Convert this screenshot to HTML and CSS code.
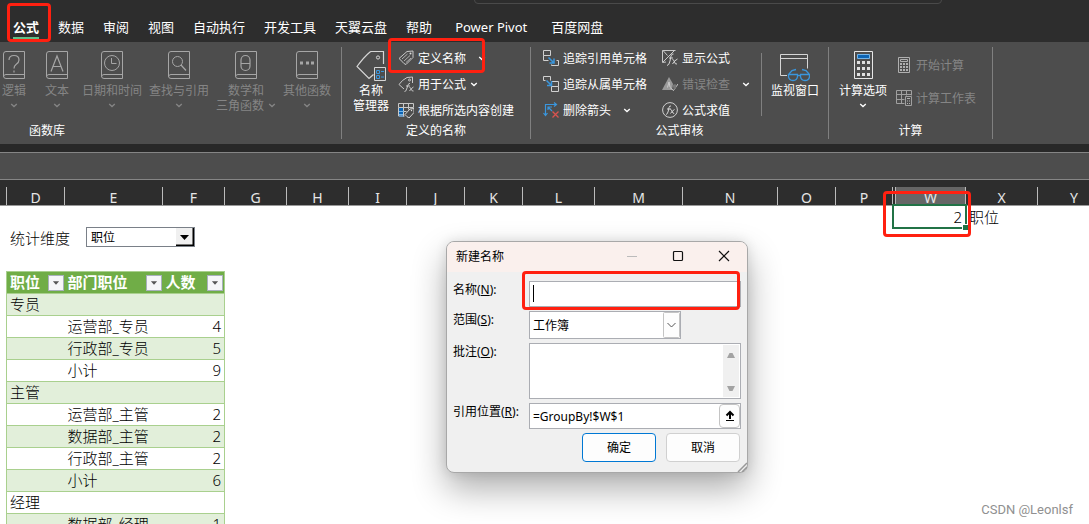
FILE: index.html
```html
<!DOCTYPE html>
<html lang="zh-CN">
<head>
<meta charset="utf-8">
<title>新建名称</title>
<link rel="stylesheet" href="styles.css">
</head>
<body>
<svg class="defs" aria-hidden="true">
  <symbol id="book" viewBox="0 0 22 28"><path d="M3 .5H21.500V27.500H3Q.5 27.500 .5 25V3Q.5 .5 3 .5M.5 25.500Q.8 23.500 3 23.500H21.500" fill="none" stroke="#a6a6a6"/></symbol>
  <symbol id="caret" viewBox="0 0 8 5"><path d="M1.200 1L4 3.600L6.800 1" fill="none" stroke="currentColor" stroke-width="1.300"/></symbol>
  <symbol id="filter" viewBox="0 0 16 16"><path d="M4.500 6h7L8 10Z" fill="#555"/></symbol>
</svg>
<div class="app">
  <header class="tabs">
    <div class="search"></div>
    <button class="tab active">公式<span class="mark mark-tab"></span></button>
    <button class="tab">数据</button>
    <button class="tab">审阅</button>
    <button class="tab">视图</button>
    <button class="tab">自动执行</button>
    <button class="tab">开发工具</button>
    <button class="tab">天翼云盘</button>
    <button class="tab">帮助</button>
    <button class="tab latin">Power Pivot</button>
    <button class="tab">百度网盘</button>
  </header>

  <section class="ribbon">
    <div class="group library">
      <div class="tools">
        <button class="big off"><svg width="22" height="28"><use href="#book"/><path d="M6 9Q6 4.500 11 4.500T16 9Q16 11.500 13 13.500Q11 15 11 17.500M11 19.500v2" fill="none" stroke="#a6a6a6" stroke-width="1.200"/></svg><span>逻辑</span><svg class="caret"><use href="#caret"/></svg></button>
        <button class="big off"><svg width="22" height="28"><use href="#book"/><path d="M5 20.500L11 5l6 15.500M7 15.500h8" fill="none" stroke="#a6a6a6" stroke-width="1.200"/></svg><span>文本</span><svg class="caret"><use href="#caret"/></svg></button>
        <button class="big off"><svg width="22" height="28"><use href="#book"/><circle cx="11" cy="12" r="7.500" fill="none" stroke="#a6a6a6"/><path d="M10.500 7v5.500h5" fill="none" stroke="#a6a6a6"/></svg><span>日期和时间</span><svg class="caret"><use href="#caret"/></svg></button>
        <button class="big off"><svg width="22" height="28"><use href="#book"/><circle cx="9.500" cy="10.500" r="5" fill="none" stroke="#a6a6a6"/><path d="M13 14l5 5.500" stroke="#a6a6a6" stroke-width="1.200"/></svg><span>查找与引用</span><svg class="caret"><use href="#caret"/></svg></button>
        <button class="big off"><svg width="22" height="28"><use href="#book"/><rect x="6" y="4.500" width="9" height="15" rx="4.500" fill="none" stroke="#a6a6a6" stroke-width="1.200"/><path d="M6 12.500h9" stroke="#a6a6a6"/></svg><span>数学和</span><span class="tail">三角函数 <svg class="caret"><use href="#caret"/></svg></span></button>
        <button class="big off"><svg width="22" height="28"><use href="#book"/><path d="M4 10.500h3v3H4zM10 10.500h3v3h-3zM15 10.500h3v3h-3z" fill="#a6a6a6"/></svg><span>其他函数</span><svg class="caret"><use href="#caret"/></svg></button>
      </div>
      <div class="caption">函数库</div>
    </div>

    <div class="group names">
      <div class="tools">
        <button class="big"><svg width="30" height="30" fill="none"><path d="M17.500 23.500L13 27.500L1 15.500Q8 6 14 1L15 .5H27.500V13" stroke="#d6d6d6" stroke-width="1.200"/><circle cx="22" cy="6.500" r="1.600" stroke="#d6d6d6"/><path d="M18.500 16.500h11v13h-11z" stroke="#d6d6d6"/><path d="M20.500 19.500h3v3h-3zM20.500 24.500h3v3h-3zM25 20.500H28M25 26H28" stroke="#3a96dd"/></svg><span>名称</span><span>管理器</span></button>
        <div class="stack">
          <button class="row"><svg width="16" height="16" fill="none"><path d="M1 8.500L9 1.500L15 1V7.500L8 14.500Q6 14 4.500 12T1 8.500Z" stroke="#c8c8c8"/><path d="M4 9l5.500-5M6 11l6-5.500M8 12.500l5-4.500" stroke="#b0b0b0"/><circle cx="12.500" cy="3.500" r="1" fill="#ddd"/></svg>定义名称<svg class="caret far"><use href="#caret"/></svg><span class="mark mark-define"></span></button>
          <button class="row"><svg width="16" height="16" fill="none"><path d="M6 13L1 8.500Q4 4 9 1.500L14.500 1V7" stroke="#c8c8c8"/><circle cx="11.500" cy="4" r="1" stroke="#c8c8c8"/><path d="M6.500 15.500Q8 16 9 12l1-3q.7-2 2-1.500M8 10h4M11.500 11.500q1.500 0 2 2t2 1.500M15.500 11q-2 1-4 4" stroke="#c8c8c8"/></svg>用于公式<svg class="caret"><use href="#caret"/></svg></button>
          <button class="row"><svg width="16" height="16" fill="none"><path d="M1 5h5v10H1z" fill="#0c64b4"/><path d="M.5 1.500h15v4H.5zM5.500 1.500v13M10.500 1.500v6M.5 9.500h8M.5 5.500V14h6" stroke="#c8c8c8"/><path d="M1 9.500h5M1 12.500h4" stroke="#73b4e8"/><path d="M7 12.500l5-5.500 4-.5v4L11 16q-2-1-4-3.500Z" fill="#4d4d4d" stroke="#d6d6d6"/><circle cx="13.500" cy="8.500" r=".7" fill="#ddd"/></svg>根据所选内容创建</button>
        </div>
      </div>
      <div class="caption">定义的名称</div>
    </div>

    <div class="group audit">
      <div class="tools">
        <div class="stack first">
          <button class="row"><svg width="16" height="16" fill="none"><path d="M.5 .5h7v5h-7zM.5 5.500v5h5M8.500 14.500v1h7v-5h-2" stroke="#d0d0d0"/><path d="M5.500 7.500l5.500 5.500M11 8.500V13H6.500" stroke="#3a96dd" stroke-width="1.500"/></svg>追踪引用单元格</button>
          <button class="row"><svg width="16" height="16" fill="none"><path d="M2.500 4.500h-2v-4h7v4M8.500 5.500h7v5h-7zM8.500 10.500v5h7v-5" stroke="#d0d0d0"/><path d="M3.500 4.500l5 5M8.500 5V9.500H4" stroke="#3a96dd" stroke-width="1.500"/></svg>追踪从属单元格</button>
          <button class="row"><svg width="16" height="16" fill="none"><path d="M2.500 13V2.500H13M11 .5l2.500 2L11 4.500M.5 11l2 2.500L4.500 11M5 5l4 4M5 8V5h4" stroke="#3a96dd" stroke-width="1.200"/><path d="M9.500 9.500l6 6M15.500 9.500l-6 6" stroke="#d9534f" stroke-width="1.300"/></svg>删除箭头<svg class="caret far"><use href="#caret"/></svg></button>
        </div>
        <div class="stack second">
          <button class="row"><svg width="16" height="16" fill="none"><path d="M4 12L.5 12.500V.5H13.500M1 .5l4.500 5M1 12L12 1" stroke="#c8c8c8"/><path d="M5 15.500Q7 15.500 8 11l1-5q.7-2.500 2.500-2M7 8h4M10.500 9.500q1.500 0 2 2.500t2.500 2M15.500 9q-2.500 1-5 5" stroke="#d6d6d6"/></svg>显示公式</button>
          <button class="row off"><svg width="16" height="16"><path d="M0 14L7 1l4 7-1 6Z" fill="#9a9a9a"/><path d="M5.500 11.500L7 6l1 5M8 11.500l3.500 3L16 8" fill="none" stroke="#ccc"/><path d="M10.500 9l3-1 1 3-2.500 3Z" fill="#777"/></svg>错误检查<svg class="caret far lit"><use href="#caret"/></svg></button>
          <button class="row"><svg width="16" height="16" fill="none"><circle cx="8" cy="8" r="7.400" stroke="#d0d0d0"/><path d="M4 12.500Q5.500 12.500 6.300 9L7 5.500Q7.500 3.500 9 4M5 7h4M8.500 7.500q1.200 0 1.700 2t2 2M12.500 7.500q-2 1-4 4" stroke="#d6d6d6"/></svg>公式求值</button>
        </div>
        <button class="big watch"><svg width="30" height="28" fill="none"><path d="M7 21.500H.5V.5h27v14M.5 4.500h27" stroke="#d6d6d6"/><g stroke="#3a96dd" stroke-width="1.300"><path d="M9 20l3-3.500 4-1M29 20l-3-3.500-4-1"/><path d="M8.500 20.500h9v2q-.5 4-4.500 4t-4.500-4ZM20.500 20.500h9v2q-.5 4-4.500 4t-4.500-4Z"/><path d="M17.500 21.500h3"/></g></svg><span>监视窗口</span></button>
      </div>
      <div class="caption">公式审核</div>
    </div>

    <div class="group calc">
      <div class="tools">
        <button class="big"><svg width="19" height="28"><path d="M.5 .5h18v27H.5z" fill="none" stroke="#e6e6e6"/><path d="M3.500 3.500h12v4h-12z" fill="#0c64b4" stroke="#73b4e8"/><path d="M3 10h3v3H3zM8 10h3v3H8zM13 10h3v3h-3zM3 16h3v3H3zM8 16h3v3H8zM13 16h3v3h-3zM3 22h3v3H3zM8 22h3v3H8zM13 22h3v3h-3z" fill="#e0e0e0"/></svg><span>计算选项</span><svg class="caret"><use href="#caret"/></svg></button>
        <div class="stack wide">
          <button class="row off"><svg width="16" height="16"><path d="M2.500 .5h11v15h-11zM4.500 2.500h7v2h-7z" fill="none" stroke="#b0b0b0"/><path d="M4 6h2v2H4zM7 6h2v2H7zM10 6h2v2h-2zM4 9h2v2H4zM7 9h2v2H7zM10 9h2v2h-2zM4 12h2v2H4zM7 12h2v2H7zM10 12h2v2h-2z" fill="#b0b0b0"/></svg>开始计算</button>
          <button class="row off"><svg width="16" height="16" fill="none"><path d="M8.500 13.500h-8V.5h15v5M.5 4.500h15M.5 9.500h8M5.500 .5v13M10.500 .5v5M9.500 6.500h6v9h-6z" stroke="#a0a0a0"/><path d="M11 8h3v1h-3zM11 10.500h1v1h-1zM13 10.500h1v1h-1zM11 13h1v1h-1zM13 13h1v1h-1z" fill="#b0b0b0"/></svg>计算工作表</button>
        </div>
      </div>
      <div class="caption">计算</div>
    </div>
  </section>

  <div class="formula-bar"></div>

  <main class="sheet">
    <div class="columns heads">
      <span></span><span>D</span><span>E</span><span>F</span><span>G</span><span>H</span><span>I</span><span>J</span><span>K</span><span>L</span><span>M</span><span>N</span><span>O</span><span>P</span><span class="gap"></span><span class="picked">W</span><span>X</span><span>Y</span>
    </div>
    <div class="columns line">
      <div class="cell-w">2<i class="handle"></i><span class="mark mark-cell"></span></div>
      <div class="cell-x">职位</div>
    </div>
    <div class="filter-line">
      <label for="dim">统计维度</label>
      <span class="combo"><select id="dim"><option>职位</option></select><svg width="18" height="18"><path d="M0 0h17v17H0z" fill="#f0f0f0"/><path d="M0 17.500h17.500V0" fill="none" stroke="#000" stroke-width="2"/><path d="M4 7h9L8.500 12Z" fill="#000"/></svg></span>
    </div>
    <table class="pivot">
      <colgroup><col class="c1"><col class="c2"><col class="c3"></colgroup>
      <thead><tr>
        <th><span>职位<svg class="funnel"><use href="#filter"/></svg></span></th>
        <th><span>部门职位<svg class="funnel"><use href="#filter"/></svg></span></th>
        <th><span>人数<svg class="funnel"><use href="#filter"/></svg></span></th>
      </tr></thead>
      <tbody>
        <tr><td>专员</td><td></td><td></td></tr>
        <tr><td></td><td>运营部_专员</td><td>4</td></tr>
        <tr><td></td><td>行政部_专员</td><td>5</td></tr>
        <tr><td></td><td>小计</td><td>9</td></tr>
        <tr><td>主管</td><td></td><td></td></tr>
        <tr><td></td><td>运营部_主管</td><td>2</td></tr>
        <tr><td></td><td>数据部_主管</td><td>2</td></tr>
        <tr><td></td><td>行政部_主管</td><td>2</td></tr>
        <tr><td></td><td>小计</td><td>6</td></tr>
        <tr><td>经理</td><td></td><td></td></tr>
        <tr><td></td><td>数据部_经理</td><td>1</td></tr>
      </tbody>
    </table>
  </main>

  <form class="dialog" role="dialog" aria-labelledby="dlg-title">
    <div class="title-bar">
      <span id="dlg-title">新建名称</span>
      <button type="button" class="win" aria-label="最小化"><svg width="12" height="12"><path d="M1 6.500h10" stroke="#bbb"/></svg></button>
      <button type="button" class="win" aria-label="最大化"><svg width="12" height="12"><rect x="1.500" y="1.500" width="9" height="9" rx="1" fill="none" stroke="#111" stroke-width="1.200"/></svg></button>
      <button type="button" class="win" aria-label="关闭"><svg width="12" height="12"><path d="M1 1l10 10M11 1L1 11" stroke="#111" stroke-width="1.200"/></svg></button>
    </div>
    <div class="fields">
      <label for="nm">名称(<u>N</u>):</label>
      <div class="field"><input id="nm" type="text"><i class="cursor"></i><span class="mark mark-name"></span></div>
      <label for="scope">范围(<u>S</u>):</label>
      <div class="field scope"><select id="scope"><option>工作簿</option></select><svg width="17" height="26"><rect x=".5" y=".5" width="16" height="25" rx="1" fill="#fdfdfd" stroke="#c4c4c4"/><path d="M4.500 11l4 4 4-4" fill="none" stroke="#555"/></svg></div>
      <label for="note">批注(<u>O</u>):</label>
      <div class="field note"><textarea id="note"></textarea><svg class="scroll" width="16" height="52"><path d="M0 0h16v52H0z" fill="#f0f0f0"/><path d="M4 13l2.500-5h3l2.500 5ZM4 41h8l-2.500 5h-3Z" fill="#a3a3a3"/></svg></div>
      <label for="ref">引用位置(<u>R</u>):</label>
      <div class="field"><input id="ref" type="text" value="=GroupBy!$W$1"><button type="button" class="pick" aria-label="选择区域"><svg width="10" height="12"><path d="M5 9V2M1.500 5.500L5 2l3.500 3.500" fill="none" stroke="#000" stroke-width="2"/><path d="M1 10.500h8" stroke="#000"/></svg></button></div>
    </div>
    <div class="actions">
      <button type="button" class="ok">确定</button>
      <button type="button">取消</button>
    </div>
    <svg class="grip" width="10" height="10"><path d="M1 10L10 1M5 10L10 5" stroke="#999" stroke-width="1.500"/></svg>
  </form>

  <div class="watermark">CSDN @Leonlsf</div>
</div>
</body>
</html>
```
FILE: styles.css
```css
* { box-sizing: border-box; }
body {
  margin: 0;
  background: #fff;
  color: #000;
  font: 12px/15px "Noto Sans", "Noto Sans CJK SC", sans-serif;
}
button, input, select, textarea {
  margin: 0;
  padding: 0;
  border: 0;
  background: none;
  color: inherit;
  font: inherit;
  appearance: none;
  outline: 0;
  resize: none;
}
svg { flex: none; display: block; }
.defs { position: absolute; width: 0; height: 0; }
.app { position: relative; height: 100vh; overflow: hidden; }

.mark {
  position: absolute;
  z-index: 2;
  border: 3px solid #ff2010;
  border-radius: 4px;
  pointer-events: none;
}
.mark-tab { inset: -13px -12px -5px -6px; }
.mark-define { inset: -9px 1px 0 -10px; }
.mark-cell { inset: -15px -6px -10px -11px; }
.mark-name { inset: -11px 0 -4px -8px; }

/* Tab strip */
.tabs {
  position: relative;
  display: flex;
  gap: 19px;
  height: 42px;
  padding: 16px 13px 0;
  background: #2d2d2d;
  color: #fff;
  font-size: 13px;
}
.search {
  position: absolute;
  top: -20px;
  left: 474px;
  width: 468px;
  height: 24px;
  border: 1px solid #4a4a4a;
  border-radius: 4px;
}
.tab { position: relative; height: 22px; line-height: 22px; white-space: nowrap; }
.tab.active { height: 23px; border-bottom: 2px solid #5fbf87; font-weight: 700; }
.tab.latin { padding: 0 5px 0 4px; }

/* Ribbon */
.ribbon {
  display: flex;
  height: 102px;
  padding: 5px 0;
  background: #4d4d4d;
  color: #fff;
}
.group {
  flex: none;
  display: flex;
  flex-direction: column;
  justify-content: space-between;
  border-right: 1px solid #808080;
}
.tools { display: flex; height: 70px; }
.caption { height: 16px; text-align: center; }
.big {
  flex: none;
  display: flex;
  flex-direction: column;
  align-items: center;
  min-width: 36px;
  padding-top: 4px;
  white-space: nowrap;
}
.big > svg:first-child { margin-bottom: 4px; }
.big svg.caret { margin-top: 5px; }
.caret { width: 8px; height: 5px; }
.tail { display: flex; align-items: center; gap: 4px; }
.big .tail .caret { margin: 0; }
.off { color: #858585; }
.lit { color: #fff; }
.stack { display: flex; flex-direction: column; }
.row {
  position: relative;
  flex: none;
  display: flex;
  align-items: center;
  align-self: flex-start;
  gap: 4px;
  height: 26px;
  padding-bottom: 4px;
  white-space: nowrap;
}
.far { margin-left: 8px; }
.library { width: 342px; overflow: hidden; }
.library .tools { justify-content: flex-end; gap: 7px; padding-right: 10px; }
.library .caption { padding-left: 29px; text-align: left; }
.names { width: 189px; }
.names .tools { padding-left: 11px; gap: 9px; }
.names .big > svg:first-child { margin-bottom: 2px; }
.audit { width: 298px; }
.audit .tools { padding-left: 12px; }
.first { width: 119px; }
.second { width: 99px; }
.watch { flex: 1; height: 63px; margin-top: 6px; padding-top: 1px; border-left: 1px solid #808080; }
.audit .watch > svg:first-child { margin-bottom: 1px; }
.calc { width: 164px; }
.calc .tools { padding-left: 10px; gap: 9px; }
.wide { gap: 7px; padding-top: 7px; }

.formula-bar {
  height: 28px;
  margin-top: 8px;
  border: solid #858585;
  border-width: 1px 0;
  background: #4d4d4d;
  box-shadow: 0 -8px #282828, 0 7px #2d2d2d;
}

/* Sheet */
.sheet { padding-top: 7px; }
.columns {
  display: grid;
  grid-template-columns: 7px 58px 98px 62px 62px 62px 58px 58px 58px 72px 88px 95px 58px 57px 3px 70px 72px 73px;
}
.heads {
  height: 19px;
  overflow: hidden;
  border-bottom: 1px solid #999;
  background: #2d2d2d;
  color: #e6e6e6;
  font-size: 14px;
  line-height: 21px;
  text-align: center;
}
.heads span { height: 18px; border-right: 1px solid #bbb; }
.heads .picked { background: #666; }
.line { height: 21px; font-size: 15px; font-weight: 300; line-height: 22px; }
.cell-w {
  grid-column: 15 / 17;
  position: relative;
  z-index: 1;
  height: 25px;
  margin: -2px -1px 0;
  padding: 0 3px 0 0;
  border: 2px solid #217346;
  text-align: right;
}
.handle {
  position: absolute;
  right: -3px;
  bottom: -3px;
  width: 6px;
  height: 6px;
  border: solid #fff;
  border-width: 1px 0 0 1px;
  background: #217346;
}
.cell-x { padding-left: 3px; }
.filter-line { display: flex; align-items: center; gap: 16px; padding-left: 10px; font-size: 15px; font-weight: 300; line-height: 20px; }
.filter-line label { padding-top: 2px; line-height: 18px; }
.combo {
  display: flex;
  width: 109px;
  height: 20px;
  border: 1px solid #7a8088;
  background: #fff;
  font-size: 12px;
  font-weight: 400;
}
.combo select { flex: 1; min-width: 0; padding-left: 4px; }

.pivot {
  width: 218px;
  margin: 24px 0 0 6px;
  border-collapse: collapse;
  table-layout: fixed;
  border: 1px solid #a9d08e;
  font-size: 15px;
  font-weight: 300;
  line-height: 21px;
}
.c1 { width: 58px; }
.c2 { width: 98px; }
.c3 { width: 62px; }
.pivot tr { height: 22px; border-bottom: 1px solid #a9d08e; }
.pivot th, .pivot td { height: 22px; padding: 0 3px; text-align: left; white-space: nowrap; }
.pivot td:last-child { text-align: right; }
.pivot thead tr { background: #70ad47; color: #fff; }
.pivot th { padding-right: 1px; font-weight: 700; }
.pivot th span { display: flex; align-items: center; justify-content: space-between; }
.pivot tbody tr:nth-child(odd) { background: #e2efda; }
.funnel { width: 16px; height: 16px; border: 1px solid #a8b0bc; background: #f5f6f8; }

/* Dialog */
.dialog {
  position: absolute;
  top: 241px;
  left: 446px;
  z-index: 3;
  width: 302px;
  border: 1px solid #a8a8a8;
  border-radius: 8px;
  background: #f0f0f0;
  box-shadow: 0 16px 34px rgba(0, 0, 0, .32), 0 0 12px rgba(0, 0, 0, .1);
}
.title-bar {
  display: flex;
  align-items: center;
  height: 30px;
  padding: 0 0 2px 9px;
  border-radius: 7px 7px 0 0;
  background: #faf0ed;
}
.title-bar > span { flex: 1; }
.win { display: grid; place-items: center; width: 46px; height: 28px; }
.fields {
  display: grid;
  grid-template-columns: 76px 1fr;
  gap: 4px 0;
  padding: 9px 6px 4px;
}
.fields label { line-height: 18px; }
.field {
  position: relative;
  display: flex;
  height: 26px;
  border: 1px solid #abadb3;
  background: #fff;
}
.field input, .field select { flex: 1; min-width: 0; padding-left: 3px; }
.field.scope { width: 152px; height: 28px; }
.field.note { height: 56px; padding: 1px; }
.field textarea { flex: 1; }
.cursor { position: absolute; top: 3px; left: 3px; width: 1px; height: 17px; background: #000; }
.pick {
  display: grid;
  place-items: center;
  width: 21px;
  height: 24px;
  border: 1px solid #c4c4c4;
  border-radius: 4px;
  background: #fdfdfd;
}
.actions { display: flex; justify-content: flex-end; gap: 10px; padding: 0 7px 10px; }
.actions button {
  width: 74px;
  height: 29px;
  border: 1px solid #d0d0d0;
  border-radius: 4px;
  background: #fdfdfd;
}
.actions .ok { border-color: #0078d4; }
.grip { position: absolute; right: 0; bottom: 0; }

.watermark {
  position: absolute;
  right: 16px;
  bottom: 7px;
  color: #909090;
  font: 13px/15px Roboto, sans-serif;
}
```
